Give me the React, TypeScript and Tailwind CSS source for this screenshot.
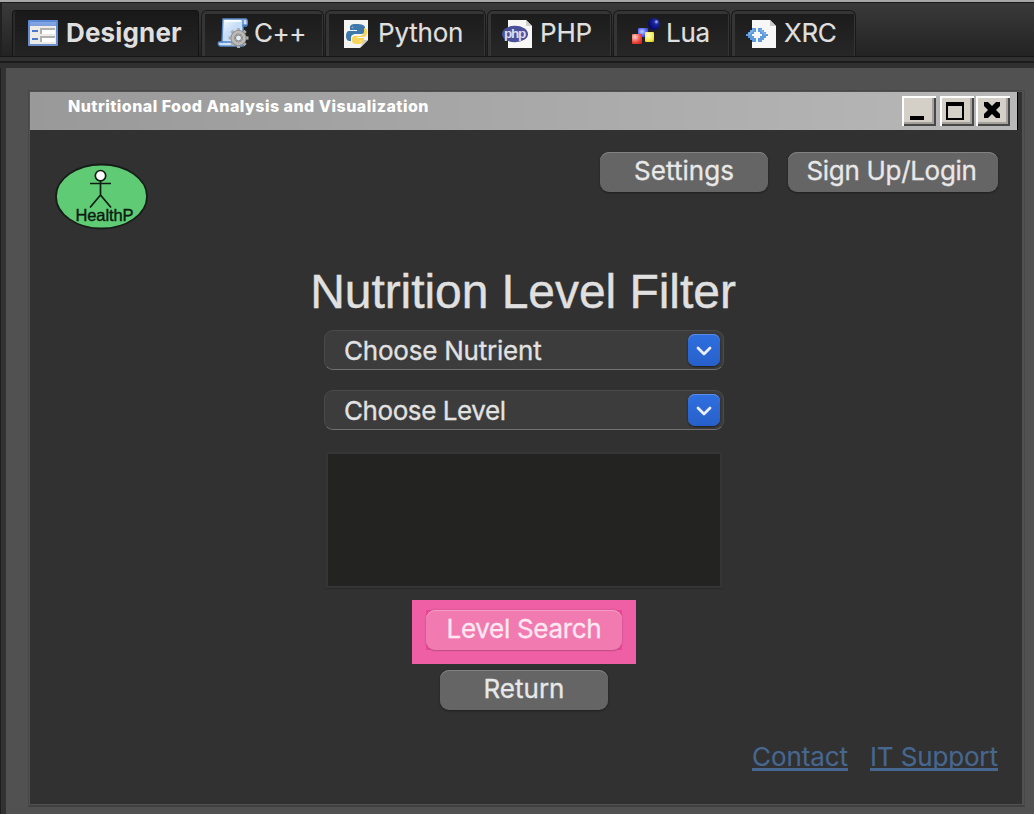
import type { ReactNode } from "react";

const DesignerIcon = () => (
  <svg width="32" height="32" viewBox="0 0 32 32">
    <defs>
      <linearGradient id="formHead" x1="0" y1="0" x2="0" y2="1">
        <stop offset="0" stopColor="#7fa6e6" />
        <stop offset="1" stopColor="#7c9edb" />
      </linearGradient>
      <linearGradient id="formFrame" x1="0" y1="0" x2="0" y2="1">
        <stop offset="0" stopColor="#5d88d4" />
        <stop offset="1" stopColor="#6d8fcb" />
      </linearGradient>
    </defs>
    <rect x="1" y="4" width="30" height="26" rx="1" fill="url(#formFrame)" />
    <rect x="3" y="6" width="26" height="4" fill="url(#formHead)" />
    <rect x="3" y="10" width="26" height="18" fill="#ecebe8" />
    <path d="M5 14h6v2H5zM5 22h6v2H5z" fill="#4d77cc" />
    <path d="M13 12h15v6H13zM13 20h15v6H13z" fill="#b1b0ad" />
    <path d="M15 14h13v4H15zM15 22h13v4H15z" fill="#fff" />
  </svg>
);

const teeth = [0, 45, 90, 135, 180, 225, 270, 315];

const CppIcon = () => (
  <svg width="32" height="32" viewBox="0 0 32 32">
    <defs>
      <linearGradient id="scroll" x1="0" y1="0" x2="1" y2="1">
        <stop offset="0" stopColor="#fff" />
        <stop offset=".45" stopColor="#c3dcf7" />
        <stop offset="1" stopColor="#eef6ff" />
      </linearGradient>
    </defs>
    <path d="M6 3h23q2 1 1 6h-4v21H3q-3-2-1-4h3z" fill="url(#scroll)" stroke="#5b8cc8" strokeWidth="1.4" />
    <path d="M26 4v6h4M4 26h10l2 3" fill="none" stroke="#4f80bf" strokeWidth="1.3" />
    <path d="M8 5h16" stroke="#fff" strokeWidth="1.6" />
    <g transform="translate(21.5 22)">
      {teeth.map((a) => (
        <rect key={a} x="-1.6" y="-10" width="3.2" height="5" fill="#b0aeac" transform={`rotate(${a})`} />
      ))}
      <circle r="5.8" fill="none" stroke="#8d8a88" strokeWidth="4.4" />
      <circle r="5.8" fill="none" stroke="#bcbab8" strokeWidth="2.8" />
      <circle r="3" fill="#e4ecf4" stroke="#7d7b79" strokeWidth="1" />
    </g>
  </svg>
);

const PythonIcon = () => (
  <svg width="32" height="32" viewBox="0 0 32 32">
    <path d="M4 4h24v20l-8 8H4z" fill="#f4f4f3" />
    <path d="M28 24h-4l-4 8z" fill="#c9c9c8" />
    <path
      d="M16 8c-5 0-6 1-6 4v2h7v1H9c-2 0-3 2-3 5 0 4 2 5 4 5h1v-3c0-3 2-4 5-4h5c3 0 4-1 4-3v-3c0-3-3-4-9-4z"
      fill="#3f78aa"
    />
    <path
      d="M17 28c5 0 7-1 7-5v-1h-7v-1h6c3 0 4-2 4-5 0-3-1-4-3-4v3c0 3-2 5-5 5h-4c-2 0-3 1-3 3v2c0 2 2 3 5 3z"
      fill="#f7d558"
    />
    <circle cx="12.5" cy="11.5" r="1" fill="#7fa9ca" />
    <circle cx="20.5" cy="25" r="1" fill="#fbe58c" />
  </svg>
);

const PhpIcon = () => (
  <svg width="32" height="32" viewBox="0 0 32 32">
    <path d="M6 4h18l6 6v22H6z" fill="#f7f7f6" />
    <path d="M24 4v6h6z" fill="#cfcfce" />
    <ellipse cx="13" cy="18" rx="13" ry="8.2" fill="#4a5099" />
    <text
      x="12.5"
      y="22"
      textAnchor="middle"
      fontSize="13.5"
      fontWeight="700"
      fontFamily="Liberation Sans, sans-serif"
      letterSpacing="-1.2"
      fill="#dcdcf2"
    >
      php
    </text>
  </svg>
);

const LuaIcon = () => (
  <svg width="32" height="32" viewBox="0 0 32 32">
    <defs>
      <radialGradient id="luaBall" cx=".7" cy=".32" r=".65">
        <stop offset="0" stopColor="#b9c2ff" />
        <stop offset=".3" stopColor="#1c2a9c" />
        <stop offset="1" stopColor="#060a78" />
      </radialGradient>
      <radialGradient id="luaRed" cx=".3" cy=".3" r=".9">
        <stop offset="0" stopColor="#ffd3ce" />
        <stop offset=".6" stopColor="#ee4a40" />
        <stop offset="1" stopColor="#cc1d14" />
      </radialGradient>
      <radialGradient id="luaBlue" cx=".4" cy=".4" r=".8">
        <stop offset="0" stopColor="#c5ceff" />
        <stop offset=".6" stopColor="#4a5cf2" />
        <stop offset="1" stopColor="#2a38cc" />
      </radialGradient>
      <radialGradient id="luaYellow" cx=".4" cy=".35" r=".8">
        <stop offset="0" stopColor="#ffffc8" />
        <stop offset=".7" stopColor="#f0e84c" />
        <stop offset="1" stopColor="#cdc02a" />
      </radialGradient>
    </defs>
    <circle cx="24" cy="8" r="6" fill="url(#luaBall)" />
    <rect x="8" y="12" width="10" height="9" rx="1" fill="url(#luaBlue)" />
    <rect x="2" y="18" width="10" height="10" rx="1" fill="url(#luaRed)" />
    <rect x="15" y="16" width="9" height="10" rx="1" fill="url(#luaYellow)" />
  </svg>
);

const XrcIcon = () => (
  <svg width="32" height="32" viewBox="0 0 32 32">
    <path d="M6 4h18l6 6v22H6z" fill="#f7f7f7" />
    <path d="M24 4v6h6z" fill="#cacaca" />
    <path
      d="M0 18h2v-2h2v-2h2v-2h4v4H8v2H6v2h2v2h2v4H6v-2H4v-2H2v-2H0zM22 18h-2v-2h-2v-2h-2v-2h-4v4h2v2h2v2h-2v2h-2v4h4v-2h2v-2h2v-2h2z"
      fill="#5c9bdd"
    />
    <path d="M2 18h2v-2h2v-2h2M14 14h2v2h2v2h2" fill="none" stroke="#86b9ee" />
  </svg>
);

function Tab({ width, pad, gap, icon, children }: { width: string; pad: string; gap: string; icon: ReactNode; children: ReactNode }) {
  return (
    <div className={`${width} mr-px h-[46px] rounded-t-md border border-b-0 border-[#191919] bg-[#353535] pl-[3px] pr-px pt-[3px]`}>
      <div className={`flex h-full items-center bg-linear-to-b from-[#1c1c1c] to-[#272727] pb-[5px] ${pad} ${gap}`}>
        <span className="-mt-px mb-px shrink-0">{icon}</span>
        {children}
      </div>
    </div>
  );
}

function Label({ spacing, children }: { spacing: string; children: string }) {
  return <span className={`mt-px whitespace-nowrap text-[26px] leading-8 text-[#dfdfdf] [-webkit-text-stroke:0.2px] ${spacing}`}>{children}</span>;
}

function Button({ className, children }: { className: string; children: string }) {
  return (
    <button
      className={`flex h-10 items-center justify-center whitespace-nowrap rounded-[9px] pb-[2px] text-[26px] leading-8 [-webkit-text-stroke:0.3px] ${className}`}
    >
      {children}
    </button>
  );
}

const GREY = "bg-[#656565] text-[#e8e8e8] shadow-[inset_0_1px_0_#828282,0_1px_2px_#1e1e1e]";

function Select({ spacing, children }: { spacing: string; children: string }) {
  return (
    <div className="flex h-10 w-[400px] items-center justify-between rounded-[9px] border border-[#4a4a4a] border-b-[#717171] bg-[#3c3c3c] pl-[19px] pr-[3px]">
      <span className={`mt-[2px] whitespace-nowrap text-[26px] leading-8 text-[#e2e2e2] [-webkit-text-stroke:0.3px] ${spacing}`}>{children}</span>
      <span className="flex size-8 items-center justify-center rounded-[7px] bg-linear-to-b from-[#2f6fe0] to-[#2760c9] shadow-[inset_0_1px_0_#5b8de6,0_1px_2px_#1c1c1c]">
        <svg width="16" height="10" viewBox="0 0 16 10" className="mt-px">
          <path d="M2 2L8 8 14 2" fill="none" stroke="#e9eefa" strokeWidth="2.8" strokeLinecap="round" strokeLinejoin="round" />
        </svg>
      </span>
    </div>
  );
}

const WINDOW_BUTTON =
  "h-[30px] w-[34px] bg-[#d4d0c8] shadow-[inset_2px_2px_0_#fff,inset_-2px_-2px_0_#484848,inset_-4px_-4px_0_#a5a29c]";

export default function App() {
  return (
    <div className="flex h-[814px] w-[1034px] flex-col overflow-hidden bg-[#323232] font-[Inter,sans-serif]">
      <div className="h-[3px] shrink-0 border-b border-[#1a1a1a] bg-[#a8a8a8]" />
      <div className="flex h-[53px] shrink-0 items-end border-l-2 border-[#202020] bg-linear-to-b from-[#3a3a3a] to-[#232323] pl-[10px]">
        <div className="mr-[2px] flex h-[46px] w-[187px] items-center gap-[7px] rounded-t border border-b-0 border-[#141414] bg-linear-to-b from-[#191919] to-[#242424] pb-px pl-[14px] shadow-[inset_2px_0_0_#2a2a2a]">
          <span className="-mt-px mb-px shrink-0"><DesignerIcon /></span>
          <span className="-mt-px whitespace-nowrap text-[26px] font-bold leading-8 tracking-[0.15px] text-[#dfdfdf]">Designer</span>
        </div>
        <Tab width="w-[123px]" pad="pl-[12px]" gap="gap-[5px]" icon={<CppIcon />}><Label spacing="tracking-[-0.5px]">C++</Label></Tab>
        <Tab width="w-[161px]" pad="pl-[11px]" gap="gap-[6px]" icon={<PythonIcon />}><Label spacing="tracking-[-0.2px]">Python</Label></Tab>
        <Tab width="w-[125px]" pad="pl-[11px]" gap="gap-[6px]" icon={<PhpIcon />}><Label spacing="tracking-[-0.2px]">PHP</Label></Tab>
        <Tab width="w-[117px]" pad="pl-[13px]" gap="gap-[4px]" icon={<LuaIcon />}><Label spacing="tracking-[-0.3px]">Lua</Label></Tab>
        <Tab width="w-[125px]" pad="pl-[11px]" gap="gap-[6px]" icon={<XrcIcon />}><Label spacing="tracking-[-0.3px]">XRC</Label></Tab>
      </div>
      <div className="h-3 shrink-0 border-t border-[#171717] bg-[#303030] pt-[4px]">
        <div className="h-[2px] bg-[#1c1c1c]" />
      </div>
      <div className="flex grow border-l border-[#1e1e1e] pl-[5px]">
        <div className="grow bg-[#515151] pl-[22px] pt-[22px]">
          <div className="h-[717px] w-[997px] border border-[#484848] border-b-2 border-b-[#404040] p-px">
            <main className="flex h-[712px] w-[992px] flex-col bg-[#313131]">
              <header className="flex h-[38px] w-[988px] shrink-0 justify-between border-r border-black bg-linear-to-r from-[#999999] to-[#b8b8b8] pl-[38px] pr-[7px]">
                <h2 className="mt-1 whitespace-nowrap text-base font-extrabold leading-5 tracking-[0.47px] text-white">
                  Nutritional Food Analysis and Visualization
                </h2>
                <div className="mt-1 flex gap-[2px]">
                  <button aria-label="Minimize" className={`${WINDOW_BUTTON} mr-[2px]`}>
                    <svg width="34" height="30" viewBox="0 0 34 30"><path d="M8 20h14v4H8z" /></svg>
                  </button>
                  <button aria-label="Maximize" className={WINDOW_BUTTON}>
                    <svg width="34" height="30" viewBox="0 0 34 30"><path fillRule="evenodd" d="M6 6h18v18H6zM8 10v12h14V10z" /></svg>
                  </button>
                  <button aria-label="Close" className={WINDOW_BUTTON}>
                    <svg width="34" height="30" viewBox="0 0 34 30">
                      <path d="M8 6h4l4 4 4-4h4v4l-4 4 4 4v4h-4l-4-4-4 4H8v-4l4-4-4-4z" />
                    </svg>
                  </button>
                </div>
              </header>
              <div className="flex h-[131px] shrink-0 items-start justify-between pl-[25px] pr-6 pt-[22px]">
                <svg width="94" height="68" viewBox="0 0 94 68" className="mt-[11px]">
                  <ellipse cx="46.5" cy="33.5" rx="45.5" ry="32" fill="#5fcb74" stroke="#161d18" strokeWidth="1.8" />
                  <path d="M45.5 17v15M35 20.5h21M45.5 32L35 44.5M45.5 32L56 44.5" fill="none" stroke="#101c13" strokeWidth="1.7" />
                  <circle cx="45.5" cy="12.7" r="5.2" fill="#fff" stroke="#101c13" strokeWidth="1.7" />
                  <text x="20.5" y="57.5" textLength="58" fontSize="16.5" fontFamily="Liberation Sans, Arial, sans-serif" fill="#0c1a10" stroke="#0c1a10" strokeWidth=".4">HealthP</text>
                </svg>
                <div className="flex gap-5">
                  <Button className={`w-[168px] tracking-[0.05px] ${GREY}`}>Settings</Button>
                  <Button className={`w-[210px] pr-[3px] tracking-[-0.3px] ${GREY}`}>Sign Up/Login</Button>
                </div>
              </div>
              <section className="flex flex-col items-center pr-[4px]">
                <h1 className="flex h-[62px] items-center whitespace-nowrap pr-[2px] font-['Liberation_Sans',Arial,sans-serif] text-[48px] leading-none tracking-[-0.05px] text-[#e0e0e0] [-webkit-text-stroke:0.4px]">
                  Nutrition Level Filter
                </h1>
                <div className="mt-[7px] flex flex-col gap-5">
                  <Select spacing="tracking-[-0.22px]">Choose Nutrient</Select>
                  <Select spacing="tracking-[-0.42px]">Choose Level</Select>
                </div>
                <div className="mt-[22px] h-[136px] w-[396px] border-2 border-[#353535] bg-[#232321] shadow-[0_1px_0_#282828]" />
                <div className="mt-[12px] flex h-16 w-56 justify-center bg-[#ef5fa5] pt-[10px]">
                  <div className="h-10 bg-[#ed4594]">
                    <Button className="w-[196px] bg-[#f17bb0] tracking-[-0.3px] text-[#ffe8f2] shadow-[inset_0_1px_0_#f69bc3,0_0_2px_#b74c81,0_1px_1px_#c05087]">Level Search</Button>
                  </div>
                </div>
                <Button className={`mt-[6px] w-[168px] tracking-[0px] ${GREY}`}>Return</Button>
              </section>
              <footer className="mt-[30px] flex justify-end gap-[22px] pr-6 text-[26px] leading-8 text-[#476790] [-webkit-text-stroke:0.15px]">
                <a className="h-[31px] w-[96px] whitespace-nowrap border-b-[3px] border-[#476790] leading-[34px] tracking-[-0.08px]">Contact</a>
                <a className="h-[31px] w-[128px] whitespace-nowrap border-b-[3px] border-[#476790] leading-[34px] tracking-[-0.15px]">IT Support</a>
              </footer>
            </main>
          </div>
        </div>
      </div>
    </div>
  );
}
